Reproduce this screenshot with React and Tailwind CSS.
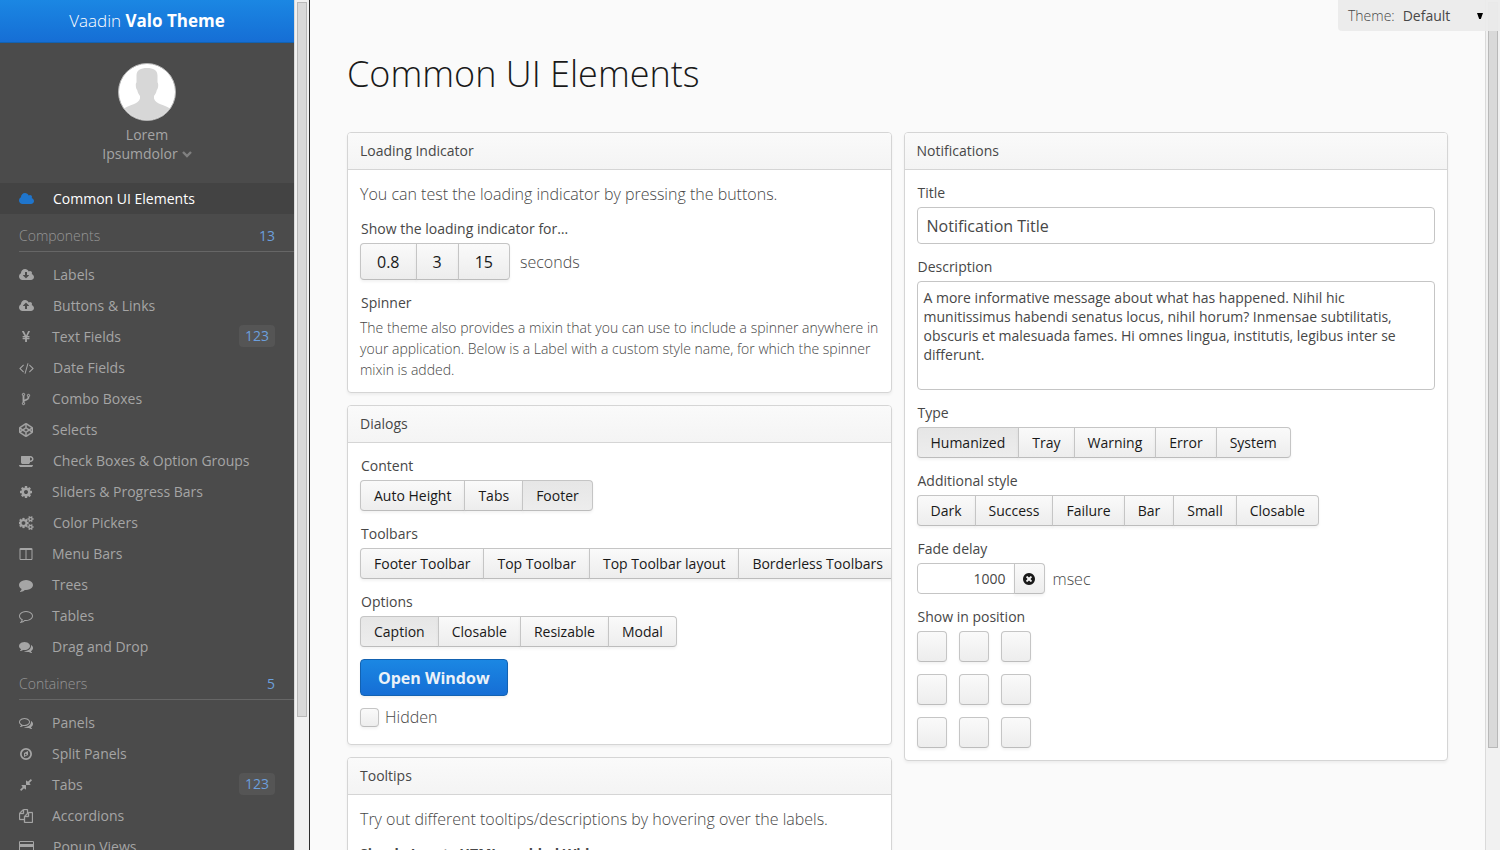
import React, { useState } from "react";

const CLOUD_BODY =
  "159-112.5 271.5t-271.5 112.5h-1088q-185 0-316.5-131.5t-131.5-316.5q0-132 71-241.5t187-163.5q-2-28-2-43 0-212 150-362t362-150q158 0 286.5 88t187.5 230q70-62 166-62 106 0 181 75t75 181q0 75-41 138 129 30 213 134.5t84 239.5z";

const COG_SMALL =
  "v140q0 16-149 31-12 27-30 52 51 113 51 138 0 4-4 7-122 71-124 71-8 0-46-47t-52-68q-20 2-30 2t-30-2q-14 21-52 68t-46 47q-2 0-124-71-4-3-4-7 0-25 51-138-18-25-30-52-149-15-149-31v-140q0-16 149-31 13-29 30-52-51-113-51-138 0-4 4-7 4-2 35-20t59-34 30-16q8 0 46 46.5t52 67.5q20-2 30-2t30 2q51-71 92-112l6-2q4 0 124 70 4 3 4 7 0 25-51 138 17 23 30 52 149 15 149 31z";

const BUBBLE_TAIL =
  "q10 24 20.5 44t25 38.5 22.5 29 26 29.5 23 25q1 1 4 4.5t4.5 5 4 5 3.5 5.5l2.5 5 2 6 .5 6.5-1 6.5q-3 14-13 22t-22 7q-50-7-86-16-154-40-278-128-90 16-176 16-271 0-472-132 58 4 88 4 161 0 309-45t264-129q125-92 192-212t67-254q0-77-23-152 129 71 204 178t75 230q0 120-71 224.5t-195 176.5z";

const ICONS = {
  cloud: { wide: true, box: "64 0 1920 1792", d: "M1984 1152q0 " + CLOUD_BODY },
  cloudDownload: {
    wide: true,
    box: "64 0 1920 1792",
    d: "M1344 928q0-14-9-23t-23-9h-224v-352q0-13-9.5-22.5t-22.5-9.5h-192q-13 0-22.5 9.5t-9.5 22.5v352h-224q-13 0-22.5 9.5t-9.5 22.5q0 14 9 23l352 352q9 9 23 9t23-9l351-351q10-12 10-24zm640 224q0 " + CLOUD_BODY,
  },
  cloudUpload: {
    wide: true,
    box: "64 0 1920 1792",
    d: "M1344 864q0-14-9-23l-352-352q-9-9-23-9t-23 9l-351 351q-10 12-10 24 0 14 9 23t23 9h224v352q0 13 9.5 22.5t22.5 9.5h192q13 0 22.5-9.5t9.5-22.5v-352h224q13 0 22.5-9.5t9.5-22.5zm640 288q0 " + CLOUD_BODY,
  },
  yen: {
    d: "M985.5 1536h-172q-13 0-22.5-9t-9.5-23v-330h-288q-13 0-22.5-9t-9.5-23v-103q0-13 9.5-22.5t22.5-9.5h288v-85h-288q-13 0-22.5-9t-9.5-23v-104q0-13 9.5-22.5t22.5-9.5h214l-321-578q-8-16 0-32 10-16 28-16h194q19 0 29 18l215 425q19 38 56 125 10-24 30.5-68t27.5-61l191-420q8-19 29-19h191q17 0 27 16 9 14 1 31l-313 579h215q13 0 22.5 9.5t9.5 22.5v104q0 14-9.5 23t-22.5 9h-290v85h290q13 0 22.5 9.5t9.5 22.5v103q0 14-9.5 23t-22.5 9h-290v330q0 13-9.5 22.5t-22.5 9.5z",
  },
  code: {
    wide: true,
    box: "0 0 1920 1792",
    d: "M617 1399l-50 50q-10 10-23 10t-23-10l-466-466q-10-10-10-23t10-23l466-466q10-10 23-10t23 10l50 50q10 10 10 23t-10 23l-393 393 393 393q10 10 10 23t-10 23zm591-1067l-373 1291q-4 13-15.5 19.5t-23.5 2.5l-62-17q-13-4-19.5-15.5t-2.5-24.5l373-1291q4-13 15.5-19.5t23.5-2.5l62 17q13 4 19.5 15.5t2.5 24.5zm657 651l-466 466q-10 10-23 10t-23-10l-50-50q-10-10-10-23t10-23l393-393-393-393q-10-10-10-23t10-23l50-50q10-10 23-10t23 10l466 466q10 10 10 23t-10 23z",
  },
  fork: {
    heavy: true,
    d: "M672 1472q0-40-28-68t-68-28-68 28-28 68 28 68 68 28 68-28 28-68zm0-1152q0-40-28-68t-68-28-68 28-28 68 28 68 68 28 68-28 28-68zm640 128q0-40-28-68t-68-28-68 28-28 68 28 68 68 28 68-28 28-68zm96 0q0 52-26 96.5t-70 69.5q-2 287-226 414-67 38-203 81-128 40-169.5 71t-41.5 100v26q44 25 70 69.5t26 96.5q0 80-56 136t-136 56-136-56-56-136q0-52 26-96.5t70-69.5v-820q-44-25-70-69.5t-26-96.5q0-80 56-136t136-56 136 56 56 136q0 52-26 96.5t-70 69.5v497q54-26 154-57 55-17 87.5-29.5t70.5-31 59-39.5 40.5-51 28-69.5 8.5-91.5q-44-25-70-69.5t-26-96.5q0-80 56-136t136-56 136 56 56 136z",
  },
  codepen: {
    heavy: true,
    d: "M216 1169l603 402v-359l-334-223zm-62-144l193-129-193-129v258zm819 546l603-402-269-180-334 223v359zm-77-493l272-182-272-182-272 182zm-411-275l334-223v-359l-603 402zm960 93l193 129v-258zm-138-93l269-180-603-402v359zm485-180v546q0 41-34 64l-819 546q-21 13-43 13t-43-13l-819-546q-34-23-34-64v-546q0-41 34-64l819-546q21-13 43-13t43 13l819 546q34 23 34 64z",
  },
  coffee: {
    wide: true,
    box: "0 0 1920 1792",
    d: "M1664 640q0-80-56-136t-136-56h-64v384h64q80 0 136-56t56-136zm-1664 768h1792q0 106-75 181t-181 75h-1280q-106 0-181-75t-75-181zm1856-768q0 159-112.5 271.5t-271.5 112.5h-64v32q0 92-66 158t-158 66h-704q-92 0-158-66t-66-158v-736q0-26 19-45t45-19h1152q159 0 271.5 112.5t112.5 271.5z",
  },
  cog: {
    d: "M1152 896q0-106-75-181t-181-75-181 75-75 181 75 181 181 75 181-75 75-181zm512-109v222q0 12-8 23t-20 13l-185 28q-19 54-39 91 35 50 107 138 10 12 10 25t-9 23q-27 37-99 108t-94 71q-12 0-26-9l-138-108q-44 23-91 38-16 136-29 186-7 28-36 28h-222q-14 0-24.5-8.5t-11.5-21.5l-28-184q-49-16-90-37l-141 107q-10 9-25 9-14 0-25-11-126-114-165-168-7-10-7-23 0-12 8-23 15-21 51-66.5t54-70.5q-27-50-41-99l-183-27q-13-2-21-12.5t-8-23.5v-222q0-12 8-23t19-13l186-28q14-46 39-92-40-57-107-138-10-12-10-24 0-10 9-23 26-36 98.5-107.5t94.5-71.5q13 0 26 10l138 107q44-23 91-38 16-136 29-186 7-28 36-28h222q14 0 24.5 8.5t11.5 21.5l28 184q49 16 90 37l142-107q9-9 24-9 13 0 25 10 129 119 165 170 7 8 7 22 0 12-8 23-15 21-51 66.5t-54 70.5q26 50 41 98l183 28q13 2 21 12.5t8 23.5z",
  },
  cogs: {
    wide: true,
    box: "0 0 1920 1792",
    heavy: true,
    d: "M832 896q0-106-75-181t-181-75-181 75-75 181 75 181 181 75 181-75 75-181zm768 512q0-52-38-90t-90-38-90 38-38 90q0 53 37.5 90.5t90.5 37.5 90.5-37.5 37.5-90.5zm0-1024q0-52-38-90t-90-38-90 38-38 90q0 53 37.5 90.5t90.5 37.5 90.5-37.5 37.5-90.5zm-384 421v185q0 10-7 19.5t-16 10.5l-155 24q-11 35-32 76 34 48 90 115 7 11 7 20 0 12-7 19-23 30-82.5 89.5t-78.5 59.5q-11 0-21-7l-115-90q-37 19-77 31-11 108-23 155-7 24-30 24h-186q-11 0-20-7.5t-10-17.5l-23-153q-34-10-75-31l-118 89q-7 7-20 7-11 0-21-8-144-133-144-160 0-9 7-19 10-14 41-53t47-61q-23-44-35-82l-152-24q-10-1-17-9.5t-7-19.5v-185q0-10 7-19.5t16-10.5l155-24q11-35 32-76-34-48-90-115-7-11-7-20 0-12 7-20 22-30 82-89t79-59q11 0 21 7l115 90q34-18 77-32 11-108 23-154 7-24 30-24h186q11 0 20 7.5t10 17.5l23 153q34 10 75 31l118-89q8-7 20-7 11 0 21 8 144 133 144 160 0 8-7 19-12 16-42 54t-45 60q23 48 34 82l152 23q10 2 17 10.5t7 19.5zm640 533" + COG_SMALL + "M1856 314" + COG_SMALL,
  },
  columns: {
    d: "M224 1536h608v-1152h-640v1120q0 13 9.5 22.5t22.5 9.5zm1376-32v-1120h-640v1152h608q13 0 22.5-9.5t9.5-22.5zm128-1216v1216q0 66-47 113t-113 47h-1344q-66 0-113-47t-47-113v-1216q0-66 47-113t113-47h1344q66 0 113 47t47 113z",
  },
  comment: {
    d: "M1792 896q0 174-120 321.5t-326 233-450 85.5q-70 0-145-8-198 175-460 242-49 14-114 22-17 2-30.5-9t-17.5-29v-1q-3-4-.5-12t2-10 4.5-9.5l6-9 7-8.5 8-9q7-8 31-34.5t34.5-38 31-39.5 32.5-51 27-59 26-76q-157-89-247.5-220t-90.5-281q0-130 71-248.5t191-204.5 286-136.5 348-50.5q244 0 450 85.5t326 233 120 321.5z",
  },
  commentO: {
    d: "M896 384q-204 0-381.5 69.5t-282 187.5-104.5 255q0 112 71.5 213.5t201.5 175.5l87 50-27 96q-24 91-70 172 152-63 275-171l43-38 57 6q69 8 130 8 204 0 381.5-69.5t282-187.5 104.5-255-104.5-255-282-187.5-381.5-69.5zm896 512q0 174-120 321.5t-326 233-450 85.5q-70 0-145-8-198 175-460 242-49 14-114 22h-5q-15 0-27-10.5t-16-27.5v-1q-3-4-.5-12t2-10 4.5-9.5l6-9 7-8.5 8-9q7-8 31-34.5t34.5-38 31-39.5 32.5-51 27-59 26-76q-157-89-247.5-220t-90.5-281q0-174 120-321.5t326-233 450-85.5 450 85.5 326 233 120 321.5z",
  },
  comments: {
    d: "M1408 768q0 139-94 257t-256.5 186.5-353.5 68.5q-86 0-176-16-124 88-278 128-36 9-86 16h-3q-11 0-20.5-8t-11.5-21q-1-3-1-6.5t.5-6.5 2-6l2.5-5 3.5-5.5 4-5 4.5-5 4-4.5q5-6 23-25t26-29.5 22.5-29 25-38.5 20.5-44q-124-72-195-177t-71-224q0-139 94-257t256.5-186.5 353.5-68.5 353.5 68.5 256.5 186.5 94 257zM1526 1425" + BUBBLE_TAIL,
  },
  commentsO: {
    d: "M704 384q-153 0-286 52t-211.5 141-78.5 191q0 82 53 158t149 132l97 56-35 84q34-20 62-39l44-31 53 10q78 14 153 14 153 0 286-52t211.5-141 78.5-191-78.5-191-211.5-141-286-52zm0-128q191 0 353.5 68.5t256.5 186.5 94 257-94 257-256.5 186.5-353.5 68.5q-86 0-176-16-124 88-278 128-36 9-86 16h-3q-11 0-20.5-8t-11.5-21q-1-3-1-6.5t.5-6.5 2-6l2.5-5 3.5-5.5 4-5 4.5-5 4-4.5q5-6 23-25t26-29.5 22.5-29 25-38.5 20.5-44q-124-72-195-177t-71-224q0-139 94-257t256.5-186.5 353.5-68.5zM1526 1425" + BUBBLE_TAIL,
  },
  compass: {
    d: "M896 128a768 768 0 1 0 0 1536a768 768 0 1 0 0-1536zM896 352a544 544 0 1 1 0 1088a544 544 0 1 1 0-1088zM1152 498v540l-512 256v-540zM768 1086l256-128l-256-120z",
  },
  compress: {
    d: "M896 960v448q0 26-19 45t-45 19-45-19l-144-144-332 332q-10 10-23 10t-23-10l-114-114q-10-10-10-23t10-23l332-332-144-144q-19-19-19-45t19-45 45-19h448q26 0 45 19t19 45zm755-672q0 13-10 23l-332 332 144 144q19 19 19 45t-19 45-45 19h-448q-26 0-45-19t-19-45v-448q0-26 19-45t45-19 45 19l144 144 332-332q10-10 23-10t23 10l114 114q10 10 10 23z",
  },
  copy: {
    heavy: true,
    d: "M1696 384q40 0 68 28t28 68v1216q0 40-28 68t-68 28h-960q-40 0-68-28t-28-68v-288h-544q-40 0-68-28t-28-68v-672q0-40 20-88t48-76l408-408q28-28 76-48t88-20h416q40 0 68 28t28 68v328q68-40 128-40h416zm-544 213l-299 299h299v-299zm-640-384l-299 299h299v-299zm196 647l316-316v-416h-384v416q0 40-28 68t-68 28h-416v640h512v-256q0-40 20-88t48-76zm956 804v-1152h-384v416q0 40-28 68t-68 28h-416v640h896z",
  },
  card: {
    wide: true,
    box: "0 0 1920 1792",
    d: "M1760 128q66 0 113 47t47 113v1216q0 66-47 113t-113 47h-1600q-66 0-113-47t-47-113v-1216q0-66 47-113t113-47h1600zm-1600 128q-13 0-22.5 9.5t-9.5 22.5v224h1664v-224q0-13-9.5-22.5t-22.5-9.5h-1600zm1600 1280q13 0 22.5-9.5t9.5-22.5v-608h-1664v608q0 13 9.5 22.5t22.5 9.5h1600zm-1504-128v-128h256v128h-256zm384 0v-128h384v128h-384z",
  },
  timesCircle: {
    d: "M1277 1122q0-26-19-45l-181-181 181-181q19-19 19-45 0-27-19-46l-90-90q-19-19-46-19-26 0-45 19l-181 181-181-181q-19-19-45-19-27 0-46 19l-90 90q-19 19-19 46 0 26 19 45l181 181-181 181q-19 19-19 45 0 27 19 46l90 90q19 19 46 19 26 0 45-19l181-181 181 181q19 19 45 19 27 0 46-19l90-90q19-19 19-46zm387-226q0 209-103 385.5t-279.5 279.5-385.5 103-385.5-103-279.5-279.5-103-385.5 103-385.5 279.5-279.5 385.5-103 385.5 103 279.5 279.5 103 385.5z",
  },
};

function Icon({ name }) {
  const icon = ICONS[name];
  return (
    <svg
      viewBox={icon.box || "0 0 1792 1792"}
      className={icon.wide ? "h-3.5 w-[15px] shrink-0" : "size-3.5 shrink-0"}
      fill="currentColor"
      fillRule="evenodd"
      stroke={icon.heavy ? "currentColor" : "none"}
      strokeWidth="40"
      aria-hidden="true"
    >
      <path d={icon.d} />
    </svg>
  );
}

const COMPONENTS = [
  ["cloudDownload", "Labels"],
  ["cloudUpload", "Buttons & Links"],
  ["yen", "Text Fields", "123"],
  ["code", "Date Fields"],
  ["fork", "Combo Boxes"],
  ["codepen", "Selects"],
  ["coffee", "Check Boxes & Option Groups"],
  ["cog", "Sliders & Progress Bars"],
  ["cogs", "Color Pickers"],
  ["columns", "Menu Bars"],
  ["comment", "Trees"],
  ["commentO", "Tables"],
  ["comments", "Drag and Drop"],
];

const CONTAINERS = [
  ["commentsO", "Panels"],
  ["compass", "Split Panels"],
  ["compress", "Tabs", "123"],
  ["copy", "Accordions"],
  ["card", "Popup Views"],
];

function MenuItem({ icon, label, badge }) {
  return (
    <a href="#" className="flex h-[31px] items-center pr-[19px] pl-[19px] text-[#a5a5a5]">
      <Icon name={icon} />
      <span className="ml-[19px] flex-1">{label}</span>
      {badge && (
        <span className="mb-0.5 rounded bg-[#555] px-1.5 leading-[22px] text-[#6c9fdc]">{badge}</span>
      )}
    </a>
  );
}

function MenuSection({ title, count, items }) {
  return (
    <section>
      <h2 className="mb-[7px] ml-[19px] flex h-[38px] items-center justify-between border-b border-[#666] pt-1.5 pr-[19px] font-light text-[#969696]">
        <span>{title}</span>
        <span className="font-normal text-[#6c9fdc]">{count}</span>
      </h2>
      {items.map(([icon, label, badge]) => (
        <MenuItem key={label} icon={icon} label={label} badge={badge} />
      ))}
    </section>
  );
}

function Sidebar() {
  return (
    <aside className="flex w-[310px] shrink-0 overflow-hidden border-r border-[#2c2c2c] bg-[#4b4b4b]">
      <nav className="flex-1 text-sm">
        <div className="flex h-[43px] items-center justify-center border-b border-[#1362b1] bg-linear-to-b from-[#1b87e3] to-[#166ed5] text-[17px] font-light text-white">
          <span>
            Vaadin <strong className="font-bold">Valo Theme</strong>
          </span>
        </div>
        <button type="button" className="mx-auto mt-5 flex flex-col items-center leading-[19px] text-[#a5a5a5]">
          <svg viewBox="0 0 58 58" className="mb-1 size-[58px]" aria-hidden="true">
            <clipPath id="avatar">
              <circle cx="29" cy="29" r="28" />
            </clipPath>
            <circle cx="29" cy="29" r="28.5" fill="#fff" />
            <path
              clipPath="url(#avatar)"
              fill="#d7d7d7"
              d="M29 5c6.500 0 10.800 2 10.500 8.500v6c1.200.6.800 6.500-.7 7.500c-.6 3-1.600 4.500-2.800 6v2.500c.8 3 3.500 4.500 6.500 5.700c4 1.500 6.500 2.300 9.500 4.300V58H6V45.500c3-2 5.500-2.800 9.500-4.300c3-1.200 5.700-2.700 6.500-5.700V33c-1.200-1.500-2.200-3-2.800-6c-1.500-1-1.900-6.900-.7-7.500v-6C18.200 7 22.500 5 29 5z"
            />
            <circle cx="29" cy="29" r="28.5" fill="none" stroke="#b4b4b4" />
          </svg>
          <span>Lorem</span>
          <span className="flex items-center gap-1">
            Ipsumdolor
            <svg viewBox="0 0 10 7" className="mt-0.5 h-[7px] w-2.5" fill="none" stroke="#808080" strokeWidth="2.4" aria-hidden="true">
              <path d="M1 1l4 4l4-4" />
            </svg>
          </span>
        </button>
        <a href="#" className="mt-5 flex h-[31px] items-center bg-[#434343] pl-[19px] text-white">
          <span className="text-[#1f75cc]">
            <Icon name="cloud" />
          </span>
          <span className="ml-[19px]">Common UI Elements</span>
        </a>
        <MenuSection title="Components" count="13" items={COMPONENTS} />
        <MenuSection title="Containers" count="5" items={CONTAINERS} />
      </nav>
      <Scrollbar portion={0.843} />
    </aside>
  );
}

function Scrollbar({ portion }) {
  return (
    <div className="flex w-[15px] shrink-0 flex-col items-center border-l border-[#dadada] bg-[#f1f1f1] pt-0.5" aria-hidden="true">
      <div className="w-2.5 border border-[#b8b8b8] bg-[#d9d9d9]" style={{ height: `${portion * 100}%` }} />
    </div>
  );
}

function Panel({ title, children }) {
  return (
    <section className="overflow-hidden rounded border border-[#d5d5d5] bg-white shadow-[0_2px_3px_rgba(0,0,0,0.05)]">
      <h2 className="border-b border-[#d5d5d5] bg-linear-to-b from-[#fafafa] to-[#f4f4f4] px-3 text-sm leading-9">{title}</h2>
      <div className="flex flex-col items-start gap-3 p-3">{children}</div>
    </section>
  );
}

function Caption({ htmlFor, children }) {
  const Tag = htmlFor ? "label" : "div";
  return (
    <Tag htmlFor={htmlFor} className="block pb-1 pl-px text-sm leading-[21px]">
      {children}
    </Tag>
  );
}

const BUTTON_FACE =
  "border border-[#c5c5c5] border-b-[#bcbcbc] bg-linear-to-b from-[#fafafa] to-[#ededed] text-[#191919] shadow-[0_2px_3px_rgba(0,0,0,0.05)]";
const BUTTON_PRESSED =
  "border border-[#c5c5c5] border-b-[#bcbcbc] bg-linear-to-b from-[#e6e6e6] to-[#ededed] text-[#191919] shadow-[0_2px_3px_rgba(0,0,0,0.05)]";

function ButtonGroup({ caption, options, selected, large, unit }) {
  const [active, setActive] = useState(selected);
  const size = large ? "h-[37px] px-4 text-base" : "h-[31px] px-[13px] text-sm";
  return (
    <div>
      <Caption>{caption}</Caption>
      <div role="group" aria-label={caption} className="flex items-center">
        {options.map((option, index) => (
          <button
            key={option}
            type="button"
            aria-pressed={option === active}
            onClick={() => selected && setActive(option)}
            className={`-ml-px shrink-0 whitespace-nowrap first:ml-0 first:rounded-l ${index === options.length - 1 ? "rounded-r" : ""} ${size} ${option === active ? BUTTON_PRESSED : BUTTON_FACE}`}
          >
            {option}
          </button>
        ))}
        {unit && <span className="ml-2.5 text-base font-light">{unit}</span>}
      </div>
    </div>
  );
}

function LoadingPanel() {
  return (
    <Panel title="Loading Indicator">
      <p className="text-base font-light">You can test the loading indicator by pressing the buttons.</p>
      <ButtonGroup large caption="Show the loading indicator for…" options={["0.8", "3", "15"]} unit="seconds" />
      <div>
        <Caption>Spinner</Caption>
        <p className="text-sm leading-[21px] font-light">
          The theme also provides a mixin that you can use to include a spinner anywhere in your application. Below is a
          Label with a custom style name, for which the spinner mixin is added.
        </p>
      </div>
    </Panel>
  );
}

function DialogsPanel() {
  return (
    <Panel title="Dialogs">
      <ButtonGroup caption="Content" options={["Auto Height", "Tabs", "Footer"]} selected="Footer" />
      <ButtonGroup caption="Toolbars" options={["Footer Toolbar", "Top Toolbar", "Top Toolbar layout", "Borderless Toolbars"]} />
      <ButtonGroup caption="Options" options={["Caption", "Closable", "Resizable", "Modal"]} selected="Caption" />
      <button
        type="button"
        className="h-[37px] rounded border border-[#1362b1] bg-linear-to-b from-[#1b87e3] to-[#166ed5] px-[17px] text-base font-bold text-[#ecf2f8] shadow-[0_2px_3px_rgba(0,0,0,0.05)]"
      >
        Open Window
      </button>
      <label className="flex items-start gap-1.5 text-base leading-[19px] font-light">
        <input type="checkbox" className={`mb-[5px] size-[19px] appearance-none rounded ${BUTTON_FACE}`} />
        Hidden
      </label>
    </Panel>
  );
}

function NotificationsPanel() {
  return (
    <Panel title="Notifications">
      <div className="w-full">
        <Caption htmlFor="title">Title</Caption>
        <input
          id="title"
          type="text"
          defaultValue="Notification Title"
          className="block h-[37px] w-full rounded border border-[#c5c5c5] bg-white px-[9px] text-base"
        />
      </div>
      <div className="w-full">
        <Caption htmlFor="description">Description</Caption>
        <textarea
          id="description"
          defaultValue="A more informative message about what has happened. Nihil hic munitissimus habendi senatus locus, nihil horum? Inmensae subtilitatis, obscuris et malesuada fames. Hi omnes lingua, institutis, legibus inter se differunt."
          className="block h-[109px] w-full resize-none rounded border border-[#c5c5c5] bg-white p-1.5 text-sm leading-[19px]"
        />
      </div>
      <ButtonGroup caption="Type" options={["Humanized", "Tray", "Warning", "Error", "System"]} selected="Humanized" />
      <ButtonGroup caption="Additional style" options={["Dark", "Success", "Failure", "Bar", "Small", "Closable"]} />
      <div>
        <Caption htmlFor="delay">Fade delay</Caption>
        <div className="flex items-center">
          <input
            id="delay"
            type="text"
            defaultValue="1000"
            className="h-[31px] w-[98px] rounded-l border border-[#c5c5c5] bg-white px-2 text-right text-sm"
          />
          <button type="button" aria-label="Clear" className={`-ml-px flex h-[31px] w-[31px] items-center justify-center rounded-r ${BUTTON_FACE}`}>
            <Icon name="timesCircle" />
          </button>
          <span className="ml-2 text-base font-light">msec</span>
        </div>
      </div>
      <div>
        <Caption>Show in position</Caption>
        <div className="grid grid-cols-[30px_30px_30px] gap-3">
          {["Top left", "Top center", "Top right", "Middle left", "Middle center", "Middle right", "Bottom left", "Bottom center", "Bottom right"].map((position) => (
            <button key={position} type="button" aria-label={position} className={`h-[31px] rounded ${BUTTON_FACE}`} />
          ))}
        </div>
      </div>
    </Panel>
  );
}

function TooltipsPanel() {
  return (
    <Panel title="Tooltips">
      <p className="text-base font-light">Try out different tooltips/descriptions by hovering over the labels.</p>
      <p className="text-sm leading-[21px] font-bold">Simple Inputs HTML enabled Wide</p>
    </Panel>
  );
}

function ThemeSelect() {
  return (
    <div className="absolute top-0 right-0 flex h-[31px] w-[162px] items-center rounded-bl bg-[#ebebeb]/95 pl-2.5 text-sm">
      <label htmlFor="theme" className="font-light">
        Theme:
      </label>
      <select id="theme" className="ml-2 w-[84px] appearance-none bg-transparent">
        <option>Default</option>
      </select>
      <svg viewBox="0 0 6 6" className="pointer-events-none -ml-2.5 size-1.5 text-black" aria-hidden="true">
        <path d="M0 0h6L3.8 6H2.2z" />
      </svg>
    </div>
  );
}

export default function App() {
  return (
    <div className="relative flex h-screen overflow-hidden bg-[#fafafa] font-['Open_Sans',sans-serif] text-[#474747]">
      <Sidebar />
      <main className="min-w-0 flex-1 overflow-hidden px-[37px]">
        <h1 className="pt-12 pb-8 text-4xl leading-[52px] font-light text-[#191919]">Common UI Elements</h1>
        <div className="grid grid-cols-2 items-start gap-3">
          <div className="flex min-w-0 flex-col gap-3">
            <LoadingPanel />
            <DialogsPanel />
            <TooltipsPanel />
          </div>
          <NotificationsPanel />
        </div>
      </main>
      <Scrollbar portion={0.88} />
      <ThemeSelect />
    </div>
  );
}
